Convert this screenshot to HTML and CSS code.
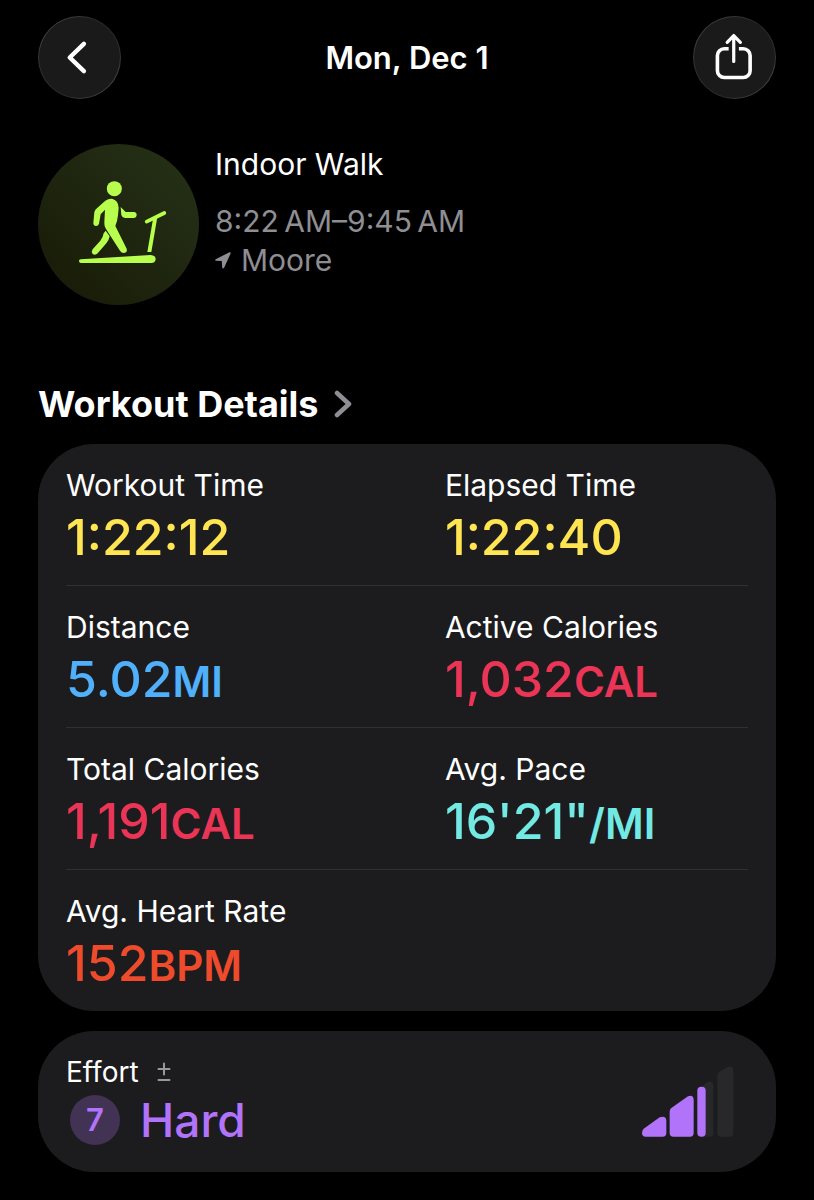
FILE: index.html
```html
<!DOCTYPE html>
<html lang="en">
<head>
<meta charset="utf-8">
<meta name="viewport" content="width=device-width, initial-scale=1">
<title>Mon, Dec 1</title>
<link rel="stylesheet" href="styles.css">
</head>
<body>
<header class="topbar">
  <button class="round-button" type="button" aria-label="Back">
    <svg class="button-icon" viewBox="0 0 83 83" fill="none" stroke="#fff" stroke-width="4.500" stroke-linecap="round" stroke-linejoin="round"><path d="M46 27.500 31.500 41.500 46 55.500"/></svg>
  </button>
  <h1 class="page-title">Mon, Dec 1</h1>
  <button class="round-button" type="button" aria-label="Share">
    <svg class="button-icon" viewBox="0 0 83 83" fill="none" stroke="#fff" stroke-width="3.700" stroke-linecap="round" stroke-linejoin="round"><path stroke-linecap="butt" d="M35.500 32.500H31a7 7 0 0 0-7 7V55a7 7 0 0 0 7 7h19.500a7 7 0 0 0 7-7V39.500a7 7 0 0 0-7-7H46"/><path stroke-width="3.300" d="M40.700 45.500V19.500M34 26l6.700-7L47.500 26"/></svg>
  </button>
</header>
<main class="content">
  <section class="workout">
    <svg class="workout-icon" viewBox="24 27 483 483" role="img" aria-label="Indoor walk">
      <defs><linearGradient id="disc" x1="0" y1="1" x2="1" y2="0"><stop offset="0.100" stop-color="#191c08"/><stop offset="1" stop-color="#263218"/></linearGradient></defs>
      <circle cx="265.500" cy="268.500" r="241.500" fill="url(#disc)"/>
      <g fill="#b8ff4d">
        <circle cx="253" cy="161" r="22.500"/>
        <path d="M226 197Q236 190 246 191Q265 196 266 218L264 240Q262 260 256 273L290 341Q293 352 282 354Q274 354 270 347L228 282Q222 273 223 262L225 224L212 238L207 266Q205 273 198 273Q190 272 190 264L193 232Q194 226 199 221Z"/>
        <path d="M227 287L239 304Q237 315 229 325L203 355Q196 362 188 357Q183 350 188 343L211 317Q219 308 221 295Z"/>
        <path d="M272 216L287 231H312Q320 232 320 240Q319 249 311 249H285Q276 248 274 240Z"/>
        <path d="M369 252L382 246L364 351H352Z"/>
        <path d="M152 373L362 360Q377 361 377 373Q376 384 364 384H152Q147 383 147 378Q147 374 152 373Z"/>
      </g>
      <path d="M350 260 403 234" stroke="#b8ff4d" stroke-width="11" stroke-linecap="round"/>
    </svg>
    <div class="workout-text">
      <h2 class="workout-name">Indoor Walk</h2>
      <p class="workout-meta">8:22&#8201;AM–9:45&#8201;AM</p>
      <p class="workout-meta place"><svg class="place-icon" viewBox="0 0 16 17"><path fill="#8e8e93" d="M14.500.200Q16 0 15.600 1.500L9 16Q7.600 17.200 7.200 15.500L6.800 9 .900 8.700Q-.700 8.200.700 7.200Z"/></svg>Moore</p>
    </div>
  </section>
  <h2 class="section-title"><a class="section-link" href="#details">Workout Details<svg class="section-chevron" viewBox="0 0 18 28" fill="none" stroke="#8e8e93" stroke-width="4.500" stroke-linecap="round" stroke-linejoin="round"><path d="M3 3 15 14 3 25"/></svg></a></h2>
  <dl class="card metrics" id="details">
    <div class="metric-row">
      <div><dt class="label">Workout Time</dt><dd class="value time">1:22:12</dd></div>
      <div><dt class="label">Elapsed Time</dt><dd class="value time">1:22:40</dd></div>
    </div>
    <div class="metric-row">
      <div><dt class="label">Distance</dt><dd class="value distance">5.02<span class="unit">MI</span></dd></div>
      <div><dt class="label">Active Calories</dt><dd class="value energy">1,032<span class="unit">CAL</span></dd></div>
    </div>
    <div class="metric-row">
      <div><dt class="label">Total Calories</dt><dd class="value energy">1,191<span class="unit">CAL</span></dd></div>
      <div><dt class="label">Avg. Pace</dt><dd class="value pace">16'21"<span class="unit">/MI</span></dd></div>
    </div>
    <div class="metric-row">
      <div><dt class="label">Avg. Heart Rate</dt><dd class="value heart">152<span class="unit">BPM</span></dd></div>
    </div>
  </dl>
  <section class="card effort">
    <div>
      <h2 class="effort-title">Effort <svg class="effort-adjust" viewBox="0 0 14 20" stroke="#98989d" stroke-width="2" stroke-linecap="round"><path d="M7 1.500V12.500M1.500 7H12.500M1.500 18H12.500"/></svg></h2>
      <p class="effort-level"><span class="effort-score">7</span>Hard</p>
    </div>
    <svg class="effort-chart" viewBox="65 139 276 213" role="img" aria-label="Effort 7 of 10">
      <path fill="#28282b" d="M291 168Q291 162 296 158L321 142Q338 136 339 152V340Q339 351 328 351H302Q291 351 291 340Z"/>
      <path fill="#28282b" d="M245 200 260 187Q278 181 279 197V340Q279 351 268 351H245Z"/>
      <g fill="#b173fa"><path d="M70 327 118 293Q137 286 138 303V340Q138 351 127 351H76Q65 351 65 340Q65 332 70 327Z"/><path d="M148 276Q148 269 153 265L203 230Q219 224 220 240V340Q220 351 209 351H159Q148 351 148 340Z"/><rect x="231" y="201" width="25" height="150" rx="12"/></g>
    </svg>
  </section>
</main>
</body>
</html>
```

FILE: styles.css
```css
* { box-sizing: border-box; }
body {
  margin: 0;
  background: #000;
  color: #fff;
  font-family: Inter, "Liberation Sans", sans-serif;
}
h1, h2, p, dl, dd { margin: 0; }
svg { display: block; flex: none; }
.topbar {
  display: flex;
  align-items: center;
  justify-content: space-between;
  padding: 16px 38px 0;
}
.round-button {
  width: 83px;
  height: 83px;
  padding: 0;
  border: 1px solid transparent;
  border-radius: 50%;
  background: linear-gradient(#1a1a1a, #1a1a1a) padding-box, linear-gradient(135deg, #505050, #2c2c2c 35%, #2c2c2c 65%, #505050) border-box;
  cursor: pointer;
}
.button-icon { width: 100%; height: 100%; }
.page-title { font-size: 31px; font-weight: 600; line-height: 40px; }
.content { padding: 45px 38px 28px; }
.workout { display: flex; gap: 16px; }
.workout-icon { width: 161px; height: 161px; }
.workout-name { font-size: 30px; font-weight: 400; line-height: 40px; margin-bottom: 18px; }
.workout-meta { color: #8e8e93; font-size: 30px; line-height: 39px; }
.place { display: flex; align-items: center; gap: 10px; }
.place-icon { width: 16px; height: 17px; }
.section-title {
  margin-top: 75px;
  font-size: 36px;
  font-weight: 700;
  line-height: 48px;
}
.section-link {
  display: inline-flex;
  align-items: center;
  gap: 15px;
  color: inherit;
  text-decoration: none;
}
.section-chevron { width: 18px; height: 28px; }
.card { background: #1c1c1e; border-radius: 56px; padding: 0 28px; }
.metrics { margin-top: 16px; }
.metric-row {
  display: grid;
  grid-template-columns: 5fr 4fr;
  padding: 22px 0 15px;
}
.metric-row + .metric-row { border-top: 1px solid #303032; }
.label { font-size: 30px; line-height: 38px; }
.value {
  font-size: 50px;
  font-weight: 500;
  line-height: 66px;
}
.unit { font-size: 42px; font-weight: 600; line-height: 1; }
.time { color: #fee551; }
.distance { color: #50b0fa; }
.energy { color: #eb3556; }
.pace { color: #72e9e3; }
.heart { color: #ee4a2c; }
.effort {
  display: flex;
  align-items: center;
  justify-content: space-between;
  margin-top: 20px;
  padding: 22px 42px 23px 28px;
}
.effort-title {
  display: flex;
  align-items: center;
  gap: 18px;
  font-size: 28px;
  font-weight: 400;
  line-height: 38px;
}
.effort-adjust { width: 14px; height: 20px; }
.effort-level {
  display: flex;
  align-items: center;
  gap: 20px;
  color: #b173fa;
  font-size: 46px;
  font-weight: 500;
  line-height: 58px;
  padding-left: 4px;
}
.effort-score {
  width: 50px;
  height: 50px;
  border-radius: 50%;
  background: #423254;
  font-size: 31px;
  font-weight: 600;
  line-height: 50px;
  text-align: center;
}
.effort-chart { width: 92px; height: 71px; }
```
